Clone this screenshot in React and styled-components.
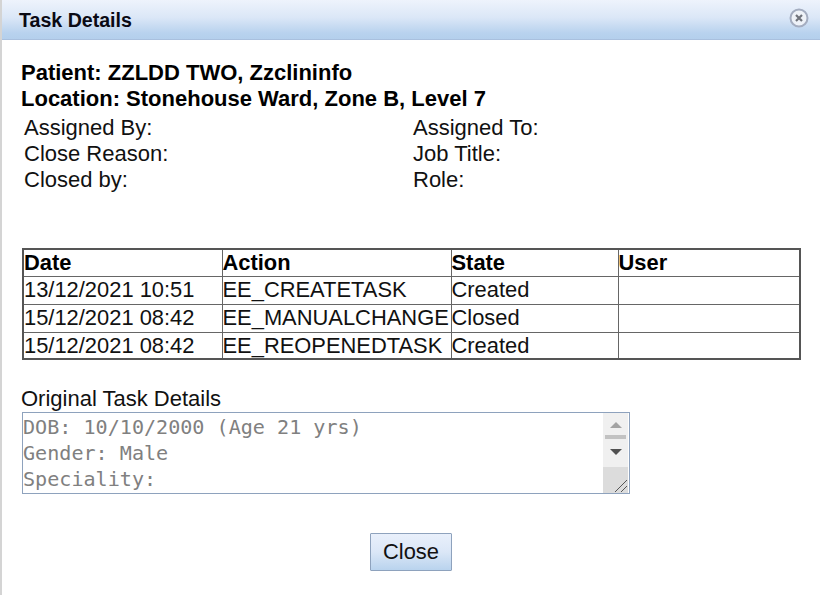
import React from 'react';
import styled, { createGlobalStyle } from 'styled-components';

const GlobalStyle = createGlobalStyle`
  html, body {
    margin: 0;
    padding: 0;
    background: #fff;
    overflow: hidden;
  }
  body {
    font-family: "Liberation Sans", Arial, sans-serif;
    font-size: 22px;
    color: #111;
  }
`;

const Dialog = styled.div`
  width: 820px;
  height: 595px;
  box-sizing: border-box;
  border-left: 2px solid #d4d4d4;
  display: flex;
  flex-direction: column;
  overflow: hidden;
`;

const TitleBar = styled.div`
  height: 40px;
  box-sizing: border-box;
  flex-shrink: 0;
  display: flex;
  align-items: center;
  justify-content: space-between;
  padding: 2px 10px 0 17px;
  background: linear-gradient(#eef3fc 0%, #dbe7f7 45%, #b8d2ee 85%, #b4cfec 100%);
  border-bottom: 1px solid #a9c0de;
`;

const Title = styled.div`
  font-size: 19.6px;
  font-weight: bold;
  color: #0a0a14;
`;

const CloseIcon = styled.svg`
  width: 22px;
  height: 22px;
  margin-top: -5px;
`;

const Content = styled.div`
  flex: 1;
  display: flex;
  flex-direction: column;
  padding: 20px 18px 0 20px;
`;

const Heading = styled.div`
  font-weight: bold;
  font-size: 22px;
  line-height: 26px;
  margin-left: -1px;
  color: #000;
`;

const Meta = styled.div`
  display: grid;
  grid-template-columns: 389px 1fr;
  grid-auto-rows: 26px;
  padding: 3px 0 0 2px;
  line-height: 26px;
  margin-bottom: 55px;
`;

const HistoryTable = styled.table`
  width: 779px;
  table-layout: fixed;
  border-collapse: collapse;
  border: 2px solid #555;
`;

const HeadCell = styled.th`
  border: 1px solid #666;
  height: 26px;
  padding: 0;
  text-align: left;
  font-size: 21.9px;
  font-weight: bold;
  color: #000;
  white-space: nowrap;
`;

const Cell = styled.td`
  border: 1px solid #666;
  border-top-color: #555;
  height: 26px;
  padding: 0 0 1px;
  font-size: 21.9px;
  line-height: 24px;
  white-space: nowrap;
  overflow: visible;
  tr:last-child > & {
    height: 25px;
    padding: 0;
  }
`;

const FieldLabel = styled.div`
  margin-top: 26px;
  margin-left: -1px;
  line-height: 26px;
`;

const TextBox = styled.div`
  width: 608px;
  height: 82px;
  box-sizing: border-box;
  border: 1px solid #8ea2bd;
  display: flex;
`;

const TextLines = styled.div`
  flex: 1;
  padding-top: 1px;
  font-family: "DejaVu Sans Mono", monospace;
  font-size: 20.1px;
  line-height: 26px;
  color: #808080;
  white-space: pre;
  overflow: hidden;
`;

const ScrollTrack = styled.div`
  width: 25px;
  margin-right: 1px;
  background: #f0f0f0;
  display: flex;
  flex-direction: column;
  align-items: center;
  padding-top: 9px;
`;

const Arrow = styled.div`
  width: 0;
  height: 0;
  border-left: 6px solid transparent;
  border-right: 6px solid transparent;
  ${(props) => (props.$down
    ? 'border-top: 6px solid #505050; margin-top: 10px;'
    : 'border-bottom: 6px solid #a3a3a3;')}
`;

const Thumb = styled.div`
  width: 21px;
  height: 4px;
  margin-top: 7px;
  background: #c2c2c2;
`;

const Grip = styled.svg`
  display: block;
  width: 25px;
  height: 26px;
  margin-top: auto;
  background: #dcdcdc;
`;

const Footer = styled.div`
  width: 778px;
  display: flex;
  justify-content: center;
  margin-top: 39px;
`;

const CloseButton = styled.button`
  width: 82px;
  height: 38px;
  padding: 0;
  font-family: inherit;
  font-size: 21.9px;
  color: #111;
  border: 1px solid #8ea2bd;
  border-radius: 1px;
  background: linear-gradient(#e9f0fb 0%, #dbe7f7 50%, #b9d3ee 100%);
`;

const rows = [
  ['13/12/2021 10:51', 'EE_CREATETASK', 'Created'],
  ['15/12/2021 08:42', 'EE_MANUALCHANGE', 'Closed'],
  ['15/12/2021 08:42', 'EE_REOPENEDTASK', 'Created'],
];

export default function App() {
  return (
    <Dialog>
      <GlobalStyle />
      <TitleBar>
        <Title>Task Details</Title>
        <CloseIcon viewBox="0 0 22 22">
          <circle cx="11" cy="11" r="8.5" fill="#eef2f8" stroke="#a4adc0" strokeWidth="2" />
          <path d="M8 8l6 6M14 8l-6 6" stroke="#70747c" strokeWidth="2.2" />
        </CloseIcon>
      </TitleBar>
      <Content>
        <Heading>Patient: ZZLDD TWO, Zzclininfo</Heading>
        <Heading>Location: Stonehouse Ward, Zone B, Level 7</Heading>
        <Meta>
          <div>Assigned By:</div>
          <div>Assigned To:</div>
          <div>Close Reason:</div>
          <div>Job Title:</div>
          <div>Closed by:</div>
          <div>Role:</div>
        </Meta>
        <HistoryTable>
          <colgroup>
            <col style={{ width: 199 }} />
            <col style={{ width: 229 }} />
            <col style={{ width: 167 }} />
            <col />
          </colgroup>
          <thead>
            <tr>
              <HeadCell>Date</HeadCell>
              <HeadCell>Action</HeadCell>
              <HeadCell>State</HeadCell>
              <HeadCell>User</HeadCell>
            </tr>
          </thead>
          <tbody>
            {rows.map((row, i) => (
              <tr key={i}>
                <Cell>{row[0]}</Cell>
                <Cell>{row[1]}</Cell>
                <Cell>{row[2]}</Cell>
                <Cell />
              </tr>
            ))}
          </tbody>
        </HistoryTable>
        <FieldLabel>Original Task Details</FieldLabel>
        <TextBox>
          <TextLines>{'DOB: 10/10/2000 (Age 21 yrs)\nGender: Male\nSpeciality:'}</TextLines>
          <ScrollTrack>
            <Arrow />
            <Thumb />
            <Arrow $down />
            <Grip viewBox="0 0 25 26">
              <path d="M12 25L24 13M18 25L24 19" stroke="#555" strokeWidth="1" />
            </Grip>
          </ScrollTrack>
        </TextBox>
        <Footer>
          <CloseButton type="button">Close</CloseButton>
        </Footer>
      </Content>
    </Dialog>
  );
}
